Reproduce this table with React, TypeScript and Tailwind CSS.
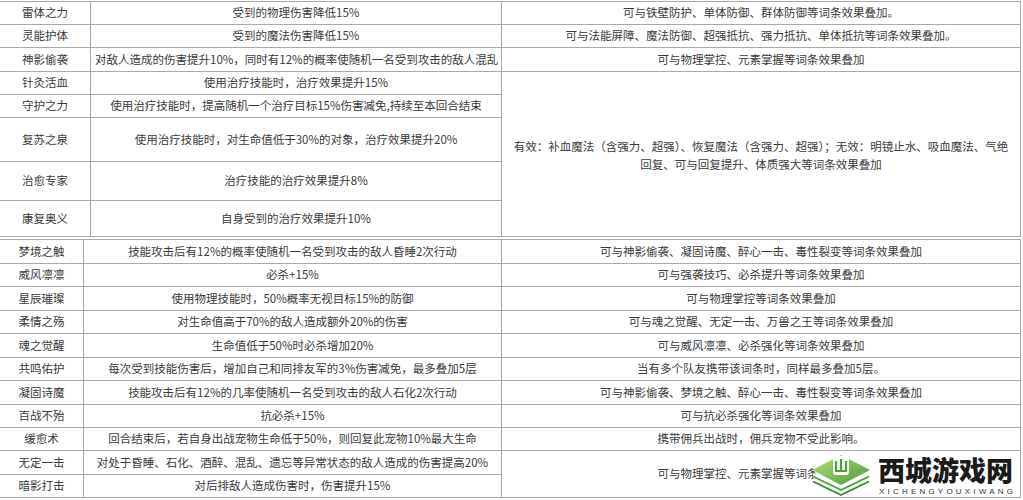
import React from 'react';

type Row = { name: string; effect: string; note?: string; span?: number; h: string };

const topRows: Row[] = [
  { name: '雷体之力', effect: '受到的物理伤害降低15%', note: '可与铁壁防护、单体防御、群体防御等词条效果叠加。', h: 'h-[23px]' },
  { name: '灵能护体', effect: '受到的魔法伤害降低15%', note: '可与法能屏障、魔法防御、超强抵抗、强力抵抗、单体抵抗等词条效果叠加。', h: 'h-[23px]' },
  { name: '神影偷袭', effect: '对敌人造成的伤害提升10%，同时有12%的概率使随机一名受到攻击的敌人混乱', note: '可与物理掌控、元素掌握等词条效果叠加', h: 'h-[24px]' },
  { name: '针灸活血', effect: '使用治疗技能时，治疗效果提升15%', note: 'merged', span: 5, h: 'h-[23px]' },
  { name: '守护之力', effect: '使用治疗技能时，提高随机一个治疗目标15%伤害减免,持续至本回合结束', h: 'h-[23px]' },
  { name: '复苏之泉', effect: '使用治疗技能时，对生命值低于30%的对象，治疗效果提升20%', h: 'h-[44px]' },
  { name: '治愈专家', effect: '治疗技能的治疗效果提升8%', h: 'h-[39px]' },
  { name: '康复奥义', effect: '自身受到的治疗效果提升10%', h: 'h-[36px]' },
];

const lowerRows: Row[] = [
  { name: '梦境之触', effect: '技能攻击后有12%的概率使随机一名受到攻击的敌人昏睡2次行动', note: '可与神影偷袭、凝固诗魔、醉心一击、毒性裂变等词条效果叠加', h: 'h-[24px]' },
  { name: '威风凛凛', effect: '必杀+15%', note: '可与强袭技巧、必杀提升等词条效果叠加', h: 'h-[23px]' },
  { name: '星辰璀璨', effect: '使用物理技能时，50%概率无视目标15%的防御', note: '可与物理掌控等词条效果叠加', h: 'h-[24px]' },
  { name: '柔情之殇', effect: '对生命值高于70%的敌人造成额外20%的伤害', note: '可与魂之觉醒、无定一击、万兽之王等词条效果叠加', h: 'h-[23px]' },
  { name: '魂之觉醒', effect: '生命值低于50%时必杀增加20%', note: '可与威风凛凛、必杀强化等词条效果叠加', h: 'h-[24px]' },
  { name: '共鸣佑护', effect: '每次受到技能伤害后，增加自己和同排友军的3%伤害减免，最多叠加5层', note: '当有多个队友携带该词条时，同样最多叠加5层。', h: 'h-[23px]' },
  { name: '凝固诗魔', effect: '技能攻击后有12%的几率使随机一名受到攻击的敌人石化2次行动', note: '可与神影偷袭、梦境之触、醉心一击、毒性裂变等词条效果叠加', h: 'h-[24px]' },
  { name: '百战不殆', effect: '抗必杀+15%', note: '可与抗必杀强化等词条效果叠加', h: 'h-[23px]' },
  { name: '缓愈术', effect: '回合结束后，若自身出战宠物生命低于50%，则回复此宠物10%最大生命', note: '携带佣兵出战时，佣兵宠物不受此影响。', h: 'h-[23px]' },
  { name: '无定一击', effect: '对处于昏睡、石化、酒醉、混乱、遗忘等异常状态的敌人造成的伤害提高20%', note: '可与物理掌控、元素掌握等词条效果叠加', span: 2, h: 'h-[24px]' },
  { name: '暗影打击', effect: '对后排敌人造成伤害时，伤害提升15%', h: 'h-[23px]' },
];

const cell = 'border border-[#a9a9a9] px-1 text-center align-middle overflow-hidden whitespace-nowrap';

function Logo() {
  return (
    <svg width="62" height="46" viewBox="0 0 62 46">
      <defs>
        <linearGradient id="top" x1="0" y1="0" x2="1" y2="1">
          <stop offset="0" stopColor="#c3e07a" />
          <stop offset="1" stopColor="#3f9c36" />
        </linearGradient>
      </defs>
      <polygon points="31,16 60,30 31,44 2,30" fill="#3a8f31" />
      <polygon points="31,14 60,28 31,42 2,28" fill="#ffffff" />
      <polygon points="31,11 60,25 31,39 2,25" fill="#4aa33c" />
      <polygon points="31,9 60,23 31,37 2,23" fill="#ffffff" />
      <polygon points="31,3 60,18 31,33 2,18" fill="url(#top)" />
      <rect x="23" y="4" width="16" height="19" rx="3" fill="#ffffff" />
      <path d="M26 9 V19 H36 V9 M31 7 V19" stroke="#4aa33c" strokeWidth="2.2" fill="none" />
    </svg>
  );
}

export default function App() {
  return (
    <div className="relative w-[1023px] h-[500px] overflow-hidden bg-white text-[11.5px] text-[#3a3a3a] font-['Noto_Sans_CJK_SC','Liberation_Sans',sans-serif]">
      <div className="pt-[1px] -ml-px">
        <table className="w-[1022px] table-fixed border-collapse">
          <colgroup>
            <col className="w-[91px]" />
            <col className="w-[411px]" />
            <col />
          </colgroup>
          <tbody>
            {topRows.map((r) => (
              <tr key={r.name} className={r.h}>
                <td className={cell}>{r.name}</td>
                <td className={cell}>{r.effect}</td>
                {r.note === 'merged' ? (
                  <td rowSpan={r.span} className="border border-[#a9a9a9] px-1 text-center align-middle leading-[18px] pt-[2px]">
                    有效：补血魔法（含强力、超强）、恢复魔法（含强力、超强）；无效：明镜止水、吸血魔法、气绝
                    <br />
                    回复、可与回复提升、体质强大等词条效果叠加
                  </td>
                ) : r.note ? (
                  <td className={cell}>{r.note}</td>
                ) : null}
              </tr>
            ))}
          </tbody>
        </table>

        <table className="mt-[2px] w-[1022px] table-fixed border-collapse">
          <colgroup>
            <col className="w-[84px]" />
            <col className="w-[418px]" />
            <col />
          </colgroup>
          <tbody>
            {lowerRows.map((r) => (
              <tr key={r.name} className={r.h}>
                <td className={cell}>{r.name}</td>
                <td className={cell}>{r.effect}</td>
                {r.note ? (
                  <td rowSpan={r.span} className={cell}>
                    {r.note}
                  </td>
                ) : null}
              </tr>
            ))}
          </tbody>
        </table>
      </div>

      {/* watermark */}
      <div className="absolute left-[810px] top-[452px] flex items-start gap-[6px]">
        <Logo />
        <div className="flex flex-col items-start pt-[4px]">
          <span className="text-[27px] leading-[28px] font-black text-[#1a1a1a]">西城游戏网</span>
          <span className="mt-[4px] text-[8px] leading-[8px] tracking-[3.2px] text-[#333] font-['Liberation_Sans',sans-serif] ml-[1px]">
            XICHENGYOUXIWANG
          </span>
        </div>
      </div>
    </div>
  );
}
